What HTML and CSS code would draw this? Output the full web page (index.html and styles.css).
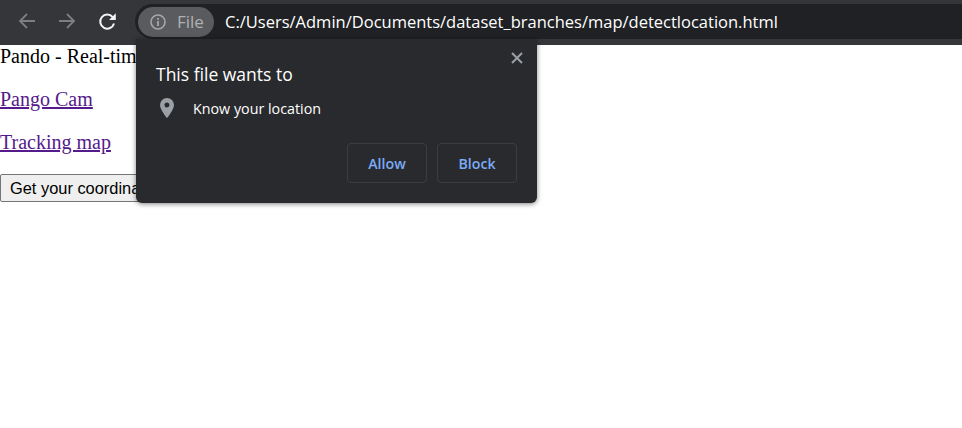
FILE: index.html
```html
<!DOCTYPE html>
<html lang="en">
<head>
    <meta charset="UTF-8">
    <meta name="viewport" content="width=device-width, initial-scale=1.0">
    <title>Detect location</title>
    <link rel="stylesheet" href="styles.css">
</head>
<body>

    <div class="toolbar">
        <div class="nav-buttons">
            <svg class="nav-icon" width="20" height="20" viewBox="0 0 20 20"><path d="M18 10H4M10 3L3 10l7 7" fill="none" stroke="#7c7e82" stroke-width="1.8"/></svg>
            <svg class="nav-icon" width="20" height="20" viewBox="0 0 20 20"><path d="M2 10h14M10 3l7 7-7 7" fill="none" stroke="#7c7e82" stroke-width="1.8"/></svg>
            <svg class="nav-icon" width="20" height="20" viewBox="0 0 20 20"><path d="M17 12.500a7 7 0 1 1-1.300-6.300" fill="none" stroke="#f1f3f4" stroke-width="2"/><path d="M18.800 2.300v6.700h-6.700z" fill="#f1f3f4"/></svg>
        </div>
        <div class="omnibox">
            <div class="site-chip">
                <svg width="18" height="18" viewBox="0 0 18 18"><circle cx="9" cy="9" r="7" fill="none" stroke="#a5a7aa" stroke-width="1.6"/><path d="M9 8v5M9 5v1.800" stroke="#a5a7aa" stroke-width="1.800"/></svg>
                <span>File</span>
            </div>
            <span class="url">C:/Users/Admin/Documents/dataset_branches/map/detectlocation.html</span>
        </div>
    </div>

    <div class="page">
        <p>Pando - Real-time tracking</p>
        <p><a href="#">Pango Cam</a></p>
        <p><a href="#">Tracking map</a></p>
        <button class="coords-button">Get your coordinates</button>
    </div>

    <div class="permission-popup">
        <svg class="close-icon" width="12" height="12" viewBox="0 0 12 12"><path d="M1 1l10 10M11 1L1 11" stroke="#9aa0a6" stroke-width="2"/></svg>
        <h3>This file wants to</h3>
        <div class="permission-row">
            <svg width="14" height="20" viewBox="0 0 14 20"><path fill-rule="evenodd" d="M7 0a7 7 0 0 1 7 7c0 4.800-7 13-7 13S0 11.800 0 7a7 7 0 0 1 7-7zm0 4.500a2.500 2.500 0 1 0 0 5 2.500 2.500 0 0 0 0-5z" fill="#9aa0a6"/></svg>
            <span>Know your location</span>
        </div>
        <div class="popup-actions">
            <button>Allow</button>
            <button>Block</button>
        </div>
    </div>

</body>
</html>
```

FILE: styles.css
```css
/* General Styles */
body {
    margin: 0;
    padding: 0;
    background-color: #fff;
    overflow: hidden;
}

/* Browser Toolbar */
.toolbar {
    display: flex;
    align-items: flex-start;
    height: 41px;
    padding-top: 4px;
    background-color: #35363a;
}

.nav-buttons {
    display: flex;
    gap: 20px;
    width: 135px;
    padding: 7px 0 0 17px;
    box-sizing: border-box;
}

.omnibox {
    flex: 1;
    display: flex;
    align-items: center;
    height: 35px;
    padding-left: 3px;
    background-color: #202124;
    border-radius: 18px 0 0 18px;
    font-family: 'Open Sans', sans-serif;
}

.site-chip {
    display: flex;
    align-items: center;
    gap: 10px;
    width: 76px;
    height: 30px;
    padding-left: 11px;
    box-sizing: border-box;
    border-radius: 15px;
    background-color: #5a5b5e;
    color: #aeb0b3;
    font-size: 17px;
}

.url {
    margin-left: 11px;
    color: #fff;
    font-size: 16.5px;
    white-space: nowrap;
}

/* Page Content */
.page {
    font-family: 'Liberation Serif', serif;
    font-size: 20px;
}

.page p {
    margin: 0 0 20px;
    line-height: 23px;
}

.page a {
    color: #551a8b;
}

.coords-button {
    height: 28px;
    padding: 0 9px;
    border: 1px solid #767676;
    border-radius: 2px;
    background-color: #efefef;
    color: #000;
    font-family: 'Liberation Sans', sans-serif;
    font-size: 16.4px;
}

/* Permission Popup */
.permission-popup {
    position: absolute;
    left: 136px;
    top: 39px;
    width: 401px;
    height: 164px;
    padding: 0 20px;
    box-sizing: border-box;
    background-color: #292a2d;
    border-radius: 0 0 6px 6px;
    box-shadow: 0 1px 5px rgba(0, 0, 0, 0.5);
    font-family: 'Open Sans', sans-serif;
    color: #fff;
}

.close-icon {
    position: absolute;
    right: 14px;
    top: 13px;
}

.permission-popup h3 {
    margin: 0;
    padding-top: 24px;
    font-size: 17.5px;
    font-weight: 400;
    line-height: 23px;
}

.permission-row {
    display: flex;
    align-items: center;
    gap: 19px;
    margin-top: 12px;
    padding-left: 4px;
    font-size: 14.3px;
}

.popup-actions {
    display: flex;
    justify-content: flex-end;
    gap: 10px;
    margin-top: 25px;
}

.popup-actions button {
    width: 80px;
    height: 40px;
    border: 1px solid #3c3d40;
    border-radius: 4px;
    background-color: transparent;
    color: #7baaf7;
    font-family: 'Open Sans', sans-serif;
    font-size: 14.2px;
    font-weight: 600;
}
```
